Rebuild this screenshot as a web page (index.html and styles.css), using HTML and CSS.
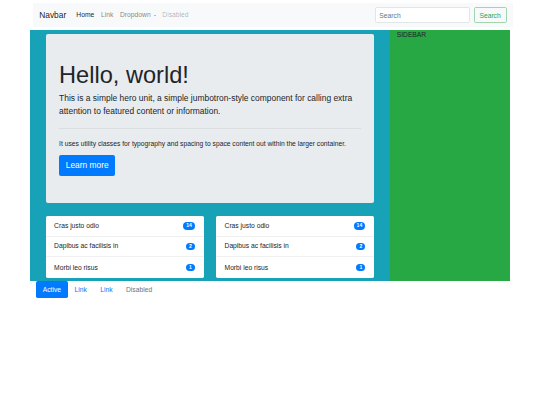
FILE: index.html
```html
<!DOCTYPE html>
<html lang="en">
<head>
<meta charset="utf-8">
<title>Navbar</title>
<link rel="stylesheet" href="styles.css">
</head>
<body>
<nav class="navbar">
  <a class="brand">Navbar</a>
  <ul class="nav-links">
    <li class="nav-link active">Home</li>
    <li class="nav-link">Link</li>
    <li class="nav-link">Dropdown<span class="caret"></span></li>
    <li class="nav-link disabled">Disabled</li>
  </ul>
  <form class="search">
    <input class="search-input" type="text" placeholder="Search">
    <button class="search-btn" type="button">Search</button>
  </form>
</nav>
<div class="main">
  <div class="content">
    <div class="jumbotron">
      <h1 class="display">Hello, world!</h1>
      <p class="lead">This is a simple hero unit, a simple jumbotron-style component for calling extra attention to featured content or information.</p>
      <hr class="divider">
      <p class="small-text">It uses utility classes for typography and spacing to space content out within the larger container.</p>
      <a class="btn-primary">Learn more</a>
    </div>
    <div class="lists">
      <ul class="list-group">
        <li class="list-item">Cras justo odio<span class="badge">14</span></li>
        <li class="list-item">Dapibus ac facilisis in<span class="badge">2</span></li>
        <li class="list-item">Morbi leo risus<span class="badge">1</span></li>
      </ul>
      <ul class="list-group">
        <li class="list-item">Cras justo odio<span class="badge">14</span></li>
        <li class="list-item">Dapibus ac facilisis in<span class="badge">2</span></li>
        <li class="list-item">Morbi leo risus<span class="badge">1</span></li>
      </ul>
    </div>
  </div>
  <div class="sidebar">SIDEBAR</div>
</div>
<ul class="pills">
  <li class="pill active">Active</li>
  <li class="pill">Link</li>
  <li class="pill">Link</li>
  <li class="pill disabled">Disabled</li>
</ul>
</body>
</html>
```
FILE: styles.css
```css
* { box-sizing: border-box; }
html, body { margin: 0; padding: 0; background: #fff; }
body {
  font-family: "Liberation Sans", Arial, sans-serif;
  font-size: 6.72px;
  line-height: 1.5;
  color: #212529;
}
ul { list-style: none; margin: 0; padding: 0; }

.navbar {
  margin: 3.4px 0 0 32.5px;
  width: 480.8px;
  height: 23.9px;
  background: #f8f9fa;
  display: flex;
  align-items: center;
  padding: 0 6.72px;
}
.brand {
  font-size: 8.4px;
  line-height: 12.6px;
  color: rgba(0,0,0,.9);
  margin-right: 6.72px;
}
.nav-links { display: flex; }
.nav-link {
  padding: 0 3.36px;
  line-height: 10.08px;
  color: rgba(0,0,0,.5);
}
.nav-link.active { color: rgba(0,0,0,.9); }
.nav-link.disabled { color: rgba(0,0,0,.3); }
.caret {
  display: inline-block;
  margin-left: 3px;
  vertical-align: 1.8px;
  border-top: 1.8px solid;
  border-left: 1.8px solid transparent;
  border-right: 1.8px solid transparent;
}
.search { margin-left: auto; display: flex; }
.search-input {
  width: 95px;
  height: 16px;
  margin: 0 3.36px 0 0;
  padding: 0 3.15px;
  border: 1px solid #e3e6e9;
  border-radius: 1.7px;
  background: #fff;
  font-family: inherit;
  font-size: 6.72px;
  color: #495057;
  outline: none;
}
.search-input::placeholder { color: #6c757d; }
.search-btn {
  width: 33px;
  height: 16px;
  padding: 0;
  border: 1px solid #9fd6ac;
  border-radius: 1.7px;
  background: transparent;
  color: #28a745;
  font-family: inherit;
  font-size: 6.72px;
}

.main {
  margin: 2.6px 0 0 30px;
  width: 480px;
  display: flex;
}
.content {
  width: 360px;
  background: #17a2b8;
  padding: 4px 16px 3.5px 15.7px;
}
.sidebar {
  width: 120px;
  background: #28a745;
  padding: 0 6.7px;
  line-height: 10.08px;
  color: #212529;
}

.jumbotron {
  background: #e9ecef;
  border-radius: 2px;
  padding: 26.9px 13.4px;
  margin-bottom: 13.4px;
}
.display {
  font-size: 23.6px;
  font-weight: 400;
  line-height: 1.2;
  margin: 0 0 3.36px;
}
.lead {
  font-size: 8.45px;
  line-height: 12.6px;
  margin: 0 0 6.72px;
}
.divider {
  margin: 10px 0;
  border: 0;
  border-top: 1px solid rgba(0,0,0,.06);
}
.small-text {
  margin: 0 0 6.72px;
  line-height: 10.08px;
}
.btn-primary {
  display: inline-block;
  vertical-align: top;
  background: #007bff;
  color: #fff;
  font-size: 8.4px;
  line-height: 12.6px;
  padding: 3.8px 6.72px;
  border-radius: 2px;
}

.lists {
  display: grid;
  grid-template-columns: 1fr 1fr;
  column-gap: 12.6px;
}
.list-group {
  background: #fff;
  border-radius: 1.7px;
}
.list-item {
  display: flex;
  justify-content: space-between;
  align-items: center;
  padding: 5.1px 8.4px;
  line-height: 10.08px;
  border-bottom: 1px solid rgba(0,0,0,.06);
  height: 20.7px;
}
.list-item:last-child { border-bottom: 0; }
.badge {
  display: inline-block;
  background: #007bff;
  color: #fff;
  font-size: 5.04px;
  font-weight: 700;
  line-height: 1;
  padding: 1.3px 3px;
  border-radius: 10px;
  margin-right: 0.4px;
}

.pills {
  display: flex;
  margin-left: 36px;
}
.pill {
  padding: 3.36px 6.72px;
  line-height: 10.08px;
  color: #007bff;
  border-radius: 1.7px;
}
.pill.active { background: #007bff; color: #fff; }
.pill.disabled { color: #6c757d; }
```
